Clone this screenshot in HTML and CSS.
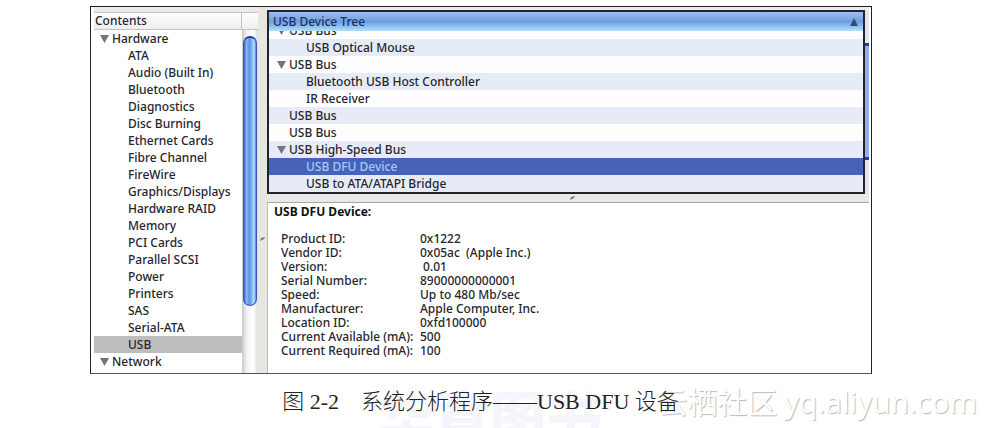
FILE: index.html
```html
<!DOCTYPE html>
<html lang="zh-CN">
<head>
    <meta charset="UTF-8">
    <meta name="viewport" content="width=device-width, initial-scale=1.0">
    <title>USB DFU 设备</title>
    <link rel="stylesheet" href="styles.css">
</head>
<body>
    <figure class="figure">
        <div class="profiler">
            <nav class="sidebar">
                <div class="sidebar-header"><span class="sidebar-title">Contents</span></div>
                <div class="sidebar-body">
                    <ul class="contents">
                        <li class="group"><button class="toggle" aria-label="Hardware"></button>Hardware</li>
                        <li><a href="#">ATA</a></li>
                        <li><a href="#">Audio (Built In)</a></li>
                        <li><a href="#">Bluetooth</a></li>
                        <li><a href="#">Diagnostics</a></li>
                        <li><a href="#">Disc Burning</a></li>
                        <li><a href="#">Ethernet Cards</a></li>
                        <li><a href="#">Fibre Channel</a></li>
                        <li><a href="#">FireWire</a></li>
                        <li><a href="#">Graphics/Displays</a></li>
                        <li><a href="#">Hardware RAID</a></li>
                        <li><a href="#">Memory</a></li>
                        <li><a href="#">PCI Cards</a></li>
                        <li><a href="#">Parallel SCSI</a></li>
                        <li><a href="#">Power</a></li>
                        <li><a href="#">Printers</a></li>
                        <li><a href="#">SAS</a></li>
                        <li><a href="#">Serial-ATA</a></li>
                        <li class="current"><a href="#">USB</a></li>
                        <li class="group"><button class="toggle" aria-label="Network"></button>Network</li>
                    </ul>
                    <div class="scrollbar"><div class="thumb"></div></div>
                </div>
            </nav>
            <div class="splitter">
                <svg width="5" height="4" viewBox="0 0 5 4"><path d="M0 4 L1 1 L5 0 L4 2 Z" fill="#777"/></svg>
            </div>
            <main class="main">
                <div class="tree-row">
                    <section class="tree">
                        <button class="tree-header">USB Device Tree
                            <svg width="8" height="8" viewBox="0 0 8 8"><path d="M4 0 L8 8 H0 Z" fill="#38496e"/></svg>
                        </button>
                        <ul class="devices">
                            <li><button class="toggle" aria-label="USB Bus"></button>USB Bus</li>
                            <li class="child">USB Optical Mouse</li>
                            <li><button class="toggle" aria-label="USB Bus"></button>USB Bus</li>
                            <li class="child">Bluetooth USB Host Controller</li>
                            <li class="child">IR Receiver</li>
                            <li class="leaf">USB Bus</li>
                            <li class="leaf">USB Bus</li>
                            <li><button class="toggle" aria-label="USB High-Speed Bus"></button>USB High-Speed Bus</li>
                            <li class="child selected">USB DFU Device</li>
                            <li class="child">USB to ATA/ATAPI Bridge</li>
                        </ul>
                    </section>
                    <div class="edge-scroll"><div class="edge-thumb"></div></div>
                </div>
                <div class="divider">
                    <svg width="5" height="4" viewBox="0 0 5 4"><path d="M0 4 L1 1 L5 0 L4 2 Z" fill="#777"/></svg>
                </div>
                <section class="details">
                    <h2>USB DFU Device:</h2>
                    <table>
                        <tr><th>Product ID:</th><td>0x1222</td></tr>
                        <tr><th>Vendor ID:</th><td>0x05ac&nbsp; (Apple Inc.)</td></tr>
                        <tr><th>Version:</th><td>&nbsp;0.01</td></tr>
                        <tr><th>Serial Number:</th><td>89000000000001</td></tr>
                        <tr><th>Speed:</th><td>Up to 480 Mb/sec</td></tr>
                        <tr><th>Manufacturer:</th><td>Apple Computer, Inc.</td></tr>
                        <tr><th>Location ID:</th><td>0xfd100000</td></tr>
                        <tr><th>Current Available (mA):</th><td>500</td></tr>
                        <tr><th>Current Required (mA):</th><td>100</td></tr>
                    </table>
                </section>
            </main>
        </div>
        <figcaption class="caption">
            <span class="publisher">华章图书</span>
            <span class="caption-text">图 2-2　系统分析程序——USB DFU 设备</span>
            <span class="watermark">云栖社区 <span class="site">yq.aliyun.com</span></span>
        </figcaption>
    </figure>
</body>
</html>
```

FILE: styles.css
```css
* {
    box-sizing: border-box;
}
body {
    margin: 0;
    background: #fff;
    color: #26262c;
    font: 500 12px/17px "Noto Sans", "Open Sans", sans-serif;
}
ul {
    list-style: none;
    margin: 0;
    padding: 0;
}
button {
    border: 0;
    padding: 0;
    font: inherit;
    color: inherit;
}
.figure {
    margin: 0;
    padding-top: 6px;
}
.profiler {
    display: flex;
    margin: 0 115px 0 90px;
    padding: 0 2px 0 3px;
    border: 1px solid #222;
    border-bottom-color: #555;
}

/* left column */
.sidebar {
    width: 164px;
    border-top: 5px solid #ecece8;
}
.sidebar-header {
    display: flex;
    height: 18px;
    padding-right: 16px;
    border: 1px solid #c4c4c4;
    border-width: 1px 0;
    background: linear-gradient(#fff, #eee);
}
.sidebar-title {
    flex: 1;
    padding-left: 1px;
    line-height: 16px;
    border-right: 1px solid #c4c4c4;
}
.sidebar-body {
    display: flex;
}
.contents {
    flex: 1;
    padding-bottom: 3px;
}
.contents li {
    padding-left: 34px;
    white-space: nowrap;
}
.contents .group {
    padding-left: 6px;
}
.contents a {
    color: inherit;
    text-decoration: none;
}
.contents .current {
    background: #bdbdbd;
}
.toggle {
    width: 9px;
    height: 8px;
    margin-right: 3px;
    background: #74747a;
    clip-path: polygon(0 0, 100% 0, 50% 100%);
}
.scrollbar {
    width: 16px;
    padding: 6px 1px 0;
    background: linear-gradient(90deg, #c9c9cd, #f2f2f2 30%, #fff 70%, #ddd);
}
.thumb {
    height: 80%;
    border: 1px solid #3a55b8;
    border-top: 2px solid #2937a0;
    border-radius: 7px;
    background: linear-gradient(90deg, #3c5fc4, #8db8f3 22%, #5d94e6 42%, #6eaaf0 60%, #b0e4fd 82%, #5b84d6);
}
.splitter {
    display: flex;
    align-items: center;
    width: 9px;
    padding: 98px 0 0 2px;
    background: #e6e6e2;
}

/* right column */
.main {
    display: flex;
    flex: 1;
    flex-direction: column;
    min-width: 0;
}
.tree-row {
    display: flex;
    padding-top: 3px;
    background: #ecece8;
}
.tree {
    flex: 1;
    border: 2px solid #20242e;
    background: #fefefe;
}
.tree-header {
    display: flex;
    justify-content: space-between;
    align-items: center;
    width: 100%;
    height: 19px;
    padding: 0 5px 0 4px;
    background: linear-gradient(#9cc0f0, #6f9de0 50%, #93c4f3 80%, #b4e0f8);
    color: #1d3060;
}
.devices {
    display: flex;
    flex-direction: column;
    justify-content: flex-end;
    height: 161px;
    overflow: hidden;
}
.devices li {
    flex: none;
    padding-left: 8px;
}
.devices li:nth-child(even) {
    background: #e6ebf7;
}
.devices .leaf {
    padding-left: 20px;
}
.devices .child {
    padding-left: 37px;
}
.devices .selected {
    background: #4563b9;
    color: #a9c9f5;
}
.edge-scroll {
    width: 4px;
    padding: 33px 0 34px;
    background: #e4e4ec;
}
.edge-thumb {
    height: 100%;
    border: solid #2b34ac;
    border-width: 3px 0;
    background: #8fb0e8;
}
.divider {
    display: flex;
    justify-content: center;
    align-items: center;
    height: 9px;
    padding-left: 8px;
    border-bottom: 1px solid #a5a5ad;
    background: #e8e8e6;
}
.details {
    flex: 1;
    padding: 0 6px;
    border-left: 1px solid #bbb;
}
.details h2 {
    margin: 0 0 12px;
    font-size: 12px;
    font-weight: 700;
    line-height: 17px;
    color: #111;
}
.details table {
    margin-left: 7px;
    border-spacing: 0;
    line-height: 14px;
}
.details th {
    width: 139px;
    padding: 0;
    font-weight: 500;
    text-align: left;
    white-space: nowrap;
}
.details td {
    padding: 0;
}

/* caption under the window */
.caption {
    position: relative;
    height: 54px;
    padding: 14px 26px 0 0;
    overflow: hidden;
    text-align: center;
    font: 22px/28px "Liberation Serif", "Noto Sans CJK SC", serif;
    color: #222;
}
.caption-text {
    position: relative;
    z-index: 1;
    font-weight: 300;
}
.publisher {
    position: absolute;
    top: 12px;
    left: 378px;
    font: 900 56px/56px "Noto Sans CJK SC", sans-serif;
    color: #f5f6fc;
}
.watermark {
    position: absolute;
    top: 8px;
    right: 10px;
    font: 30px/36px "Noto Sans CJK SC", sans-serif;
    color: #fff;
    text-shadow: 1px 1px 1px #bbb;
}
.site {
    font-family: "Open Sans", sans-serif;
}
```
